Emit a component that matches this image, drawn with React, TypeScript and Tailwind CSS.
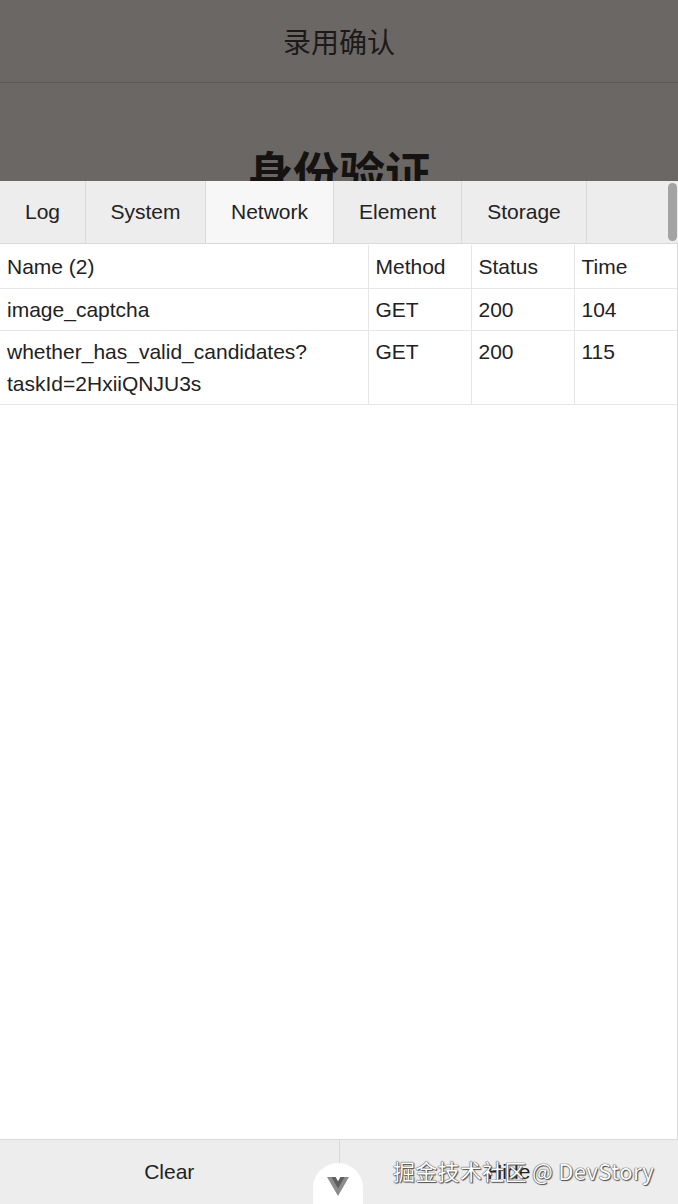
import React from 'react';

const tabs = [
  { label: 'Log', w: 'w-[86px]' },
  { label: 'System', w: 'w-[120px]' },
  { label: 'Network', w: 'w-[128px]', active: true },
  { label: 'Element', w: 'w-[128px]' },
  { label: 'Storage', w: 'w-[125px]' },
];

const rows = [
  { name: 'image_captcha', method: 'GET', status: '200', time: '104' },
  { name: 'whether_has_valid_candidates?\ntaskId=2HxiiQNJU3s', method: 'GET', status: '200', time: '115' },
];

const VueMark = () => (
  <svg width="22" height="19" viewBox="0 0 261.76 226.69">
    <path d="M161.1 0 130.9 52.3 100.7 0H0l130.9 226.7L261.8 0z" fill="#8c8c8c" />
    <path d="M161.1 0 130.9 52.3 100.7 0H52.4l78.5 136L209.4 0z" fill="#5e5e5e" />
  </svg>
);

const App: React.FC = () => {
  return (
    <div className="w-[678px] h-[1204px] flex flex-col overflow-hidden font-['Liberation_Sans','Noto_Sans_CJK_SC',sans-serif]">
      {/* dimmed page behind the console */}
      <div className="h-[181px] shrink-0 overflow-hidden bg-[#6b6764]">
        <div className="h-[83px] flex items-center justify-center border-b border-[#5b5856] text-[28px] text-[#1c1a19] font-['Noto_Sans_CJK_SC',sans-serif]">
          录用确认
        </div>
        <div className="pt-[64px] text-center text-[46px] font-bold leading-none text-[#141312] font-['Noto_Sans_CJK_SC',sans-serif]">
          身份验证
        </div>
      </div>

      {/* console panel */}
      <div className="flex-1 flex flex-col bg-white min-h-0">
        <div className="h-[63px] shrink-0 flex bg-[#ededed] border-b border-[#d9d9d9] relative">
          {tabs.map((t) => (
            <div
              key={t.label}
              className={`${t.w} flex items-center justify-center border-r border-[#d9d9d9] text-[21px] text-[#222] ${t.active ? 'bg-[#f7f7f7]' : ''}`}
            >
              {t.label}
            </div>
          ))}
          <div className="absolute right-[1px] top-[2px] w-[9px] h-[58px] rounded-full bg-[#a3a3a3]" />
        </div>

        <div className="flex-1 pt-[1px] border-r border-[#d9d9d9] min-h-0">
          <table className="w-full border-collapse text-[21px] text-[#222] table-fixed">
            <colgroup>
              <col className="w-[368px]" />
              <col className="w-[103px]" />
              <col className="w-[103px]" />
              <col />
            </colgroup>
            <thead>
              <tr className="h-[43px] border-b border-[#e6e6e6]">
                <th className="font-normal text-left px-[7px] border-r border-[#e6e6e6]">Name (2)</th>
                <th className="font-normal text-left px-[7px] border-r border-[#e6e6e6]">Method</th>
                <th className="font-normal text-left px-[7px] border-r border-[#e6e6e6]">Status</th>
                <th className="font-normal text-left px-[7px]">Time</th>
              </tr>
            </thead>
            <tbody>
              {rows.map((r) => (
                <tr key={r.time} className="border-b border-[#e6e6e6] align-top leading-[32px]">
                  <td className="px-[7px] pt-[5px] pb-[4px] border-r border-[#e6e6e6] whitespace-pre-line">{r.name}</td>
                  <td className="px-[7px] pt-[5px] pb-[4px] border-r border-[#e6e6e6]">{r.method}</td>
                  <td className="px-[7px] pt-[5px] pb-[4px] border-r border-[#e6e6e6]">{r.status}</td>
                  <td className="px-[7px] pt-[5px] pb-[4px]">{r.time}</td>
                </tr>
              ))}
            </tbody>
          </table>
        </div>

        <div className="h-[65px] shrink-0 flex bg-[#ededed] border-t border-[#d9d9d9] relative text-[21px] text-[#222]">
          <div className="flex-1 flex items-center justify-center border-r border-[#d9d9d9]">Clear</div>
          <div className="flex-1 flex items-center justify-center">Hide</div>

          <div className="absolute left-[313px] top-[23px] w-[50px] h-[42px] bg-white rounded-t-[25px] flex items-start justify-center pt-[14px]">
            <VueMark />
          </div>

          <div className="absolute left-[393px] top-[14px] text-[22px] tracking-[0.3px] text-white font-['Noto_Sans_CJK_SC',sans-serif] [text-shadow:0_0_1px_#333,0_0_1px_#333,1px_1px_1px_#555]">
            掘金技术社区 @ DevStory
          </div>
        </div>
      </div>
    </div>
  );
};

export default App;
